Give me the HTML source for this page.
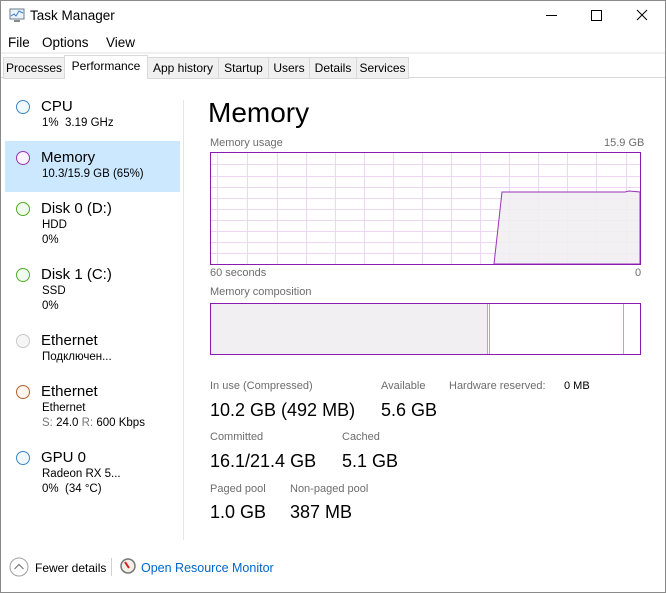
<!DOCTYPE html>
<html><head><style>
body{margin:0;width:666px;height:593px;overflow:hidden;background:#fff;font-family:"Liberation Sans",sans-serif;position:relative}
.a{position:absolute;white-space:nowrap}
.win{position:absolute;left:0;top:0;width:664px;height:591px;border:1px solid #8a8a8a}
.tab{position:absolute;top:57px;height:20px;background:#f0f0f0;border:1px solid #d9d9d9;font-size:12px;line-height:20px;text-align:center;color:#000}
.circ{position:absolute;width:12px;height:12px;border-radius:50%;border:1px solid}
.nm{font-size:15px;color:#000}
.sb{font-size:11.5px;color:#000}
.lb{font-size:11px;color:#6d6d6d}
.vl{font-size:18px;color:#000}
</style></head><body>
<div class="win"></div>
<svg class="a" style="left:8px;top:8px" width="18" height="16"><rect x="2" y="1" width="14" height="10" fill="#eaf3fb" stroke="#6a7a8a"/><polyline points="3,8 6,6 8,8 11,3 15,5" fill="none" stroke="#3b7cc0"/><rect x="6" y="12" width="6" height="2" fill="#888"/></svg>
<div class="a" style="left:30px;top:8px;font-size:13.5px">Task Manager</div>
<div class="a" style="left:546px;top:15px;width:11px;height:1px;background:#000"></div>
<div class="a" style="left:591px;top:10px;width:9px;height:9px;border:1px solid #000"></div>
<svg class="a" style="left:636px;top:9px" width="12" height="12"><path d="M1 1L11 11M11 1L1 11" stroke="#000"/></svg>
<div class="a" style="left:8px;top:35px;font-size:13.5px">File</div>
<div class="a" style="left:42px;top:35px;font-size:13.5px">Options</div>
<div class="a" style="left:106px;top:35px;font-size:13.5px">View</div>
<div class="a" style="left:1px;top:52px;width:664px;height:2px;background:#f0f0f0"></div>
<div class="a" style="left:1px;top:77px;width:664px;height:1px;background:#d9d9d9"></div>
<div class="tab" style="left:3px;width:60px">Processes</div>
<div class="tab" style="left:147px;width:70px">App history</div>
<div class="tab" style="left:218px;width:49px">Startup</div>
<div class="tab" style="left:268px;width:40px">Users</div>
<div class="tab" style="left:309px;width:46px">Details</div>
<div class="tab" style="left:356px;width:51px">Services</div>
<div class="tab" style="left:64px;top:55px;width:82px;height:23px;background:#fff;border-bottom:none;line-height:21px">Performance</div>
<div class="a" style="left:183px;top:100px;width:1px;height:440px;background:#e5e5e5"></div>
<div class="a" style="left:5px;top:141px;width:175px;height:51px;background:#cce8ff"></div>
<div class="circ" style="left:16px;top:100px;border-color:#3a86c8;background:#f2f8fd"></div>
<div class="a nm" style="left:41px;top:98px">CPU</div><div class="a sb" style="left:42px;top:117px">1%&nbsp; 3.19 GHz</div>
<div class="circ" style="left:16px;top:151px;border-color:#9b33b8;background:#fbf4fd"></div>
<div class="a nm" style="left:41px;top:149px">Memory</div><div class="a sb" style="left:42px;top:168px">10.3/15.9 GB (65%)</div>
<div class="circ" style="left:16px;top:202px;border-color:#4fae25;background:#f2fbef"></div>
<div class="a nm" style="left:41px;top:200px">Disk 0 (D:)</div><div class="a sb" style="left:42px;top:219px">HDD</div><div class="a sb" style="left:42px;top:234px">0%</div>
<div class="circ" style="left:16px;top:268px;border-color:#4fae25;background:#f2fbef"></div>
<div class="a nm" style="left:41px;top:266px">Disk 1 (C:)</div><div class="a sb" style="left:42px;top:285px">SSD</div><div class="a sb" style="left:42px;top:300px">0%</div>
<div class="circ" style="left:16px;top:334px;border-color:#c8c8c8;background:#f6f6f6"></div>
<div class="a nm" style="left:41px;top:332px">Ethernet</div><div class="a sb" style="left:42px;top:351px">Подключен...</div>
<div class="circ" style="left:16px;top:385px;border-color:#b8602a;background:#fdf6f1"></div>
<div class="a nm" style="left:41px;top:383px">Ethernet</div><div class="a sb" style="left:42px;top:402px">Ethernet</div><div class="a sb" style="left:42px;top:417px"><span style="color:#777">S:</span> 24.0 <span style="color:#777">R:</span> 600 Kbps</div>
<div class="circ" style="left:16px;top:451px;border-color:#3a86c8;background:#f2f8fd"></div>
<div class="a nm" style="left:41px;top:449px">GPU 0</div><div class="a sb" style="left:42px;top:468px">Radeon RX 5...</div><div class="a sb" style="left:42px;top:483px">0%&nbsp; (34 °C)</div>
<div class="a" style="left:208px;top:97px;font-size:28px">Memory</div>
<div class="a lb" style="left:210px;top:137px">Memory usage</div>
<div class="a lb" style="left:604px;top:137px">15.9 GB</div>
<svg class="a" style="left:210px;top:152px" width="431" height="113">
<g stroke="#ecd6f2" stroke-width="1">
<path d="M7.5 0V113M37.5 0V113M67.5 0V113M96.5 0V113M125.5 0V113M154.5 0V113M183.5 0V113M212.5 0V113M241.5 0V113M270.5 0V113M299.5 0V113M328.5 0V113M357.5 0V113M386.5 0V113M416.5 0V113"/>
<path d="M0 12.5H431M0 24.5H431M0 35.5H431M0 46.5H431M0 57.5H431M0 68.5H431M0 79.5H431M0 90.5H431M0 101.5H431"/>
</g>
<path d="M284 112L292 40H415L419 39L430 40V112Z" fill="#f1eef2" fill-opacity=".9" stroke="#9b33b8"/>
<rect x=".5" y=".5" width="430" height="112" fill="none" stroke="#8b1ab0"/>
</svg>
<div class="a lb" style="left:210px;top:267px">60 seconds</div>
<div class="a lb" style="left:635px;top:267px">0</div>
<div class="a lb" style="left:210px;top:286px">Memory composition</div>
<svg class="a" style="left:210px;top:303px" width="431" height="52">
<rect x="1" y="1" width="277" height="50" fill="#f1eff2"/>
<path d="M277.5 1V51M279.5 1V51M413.5 1V51" stroke="#c79ad6"/>
<rect x=".5" y=".5" width="430" height="51" fill="none" stroke="#8b1ab0"/>
</svg>
<div class="a lb" style="left:210px;top:380px">In use (Compressed)</div>
<div class="a lb" style="left:381px;top:380px">Available</div>
<div class="a lb" style="left:449px;top:380px">Hardware reserved:</div>
<div class="a" style="left:564px;top:380px;font-size:11px">0 MB</div>
<div class="a vl" style="left:210px;top:400px">10.2 GB (492 MB)</div>
<div class="a vl" style="left:381px;top:400px">5.6 GB</div>
<div class="a lb" style="left:210px;top:431px">Committed</div>
<div class="a lb" style="left:342px;top:431px">Cached</div>
<div class="a vl" style="left:210px;top:451px">16.1/21.4 GB</div>
<div class="a vl" style="left:342px;top:451px">5.1 GB</div>
<div class="a lb" style="left:210px;top:483px">Paged pool</div>
<div class="a lb" style="left:290px;top:483px">Non-paged pool</div>
<div class="a vl" style="left:210px;top:502px">1.0 GB</div>
<div class="a vl" style="left:290px;top:502px">387 MB</div>
<svg class="a" style="left:9px;top:557px" width="20" height="20"><circle cx="10" cy="10" r="9" fill="#fff" stroke="#a0a0a0"/><path d="M5.5 12L10 7.5L14.5 12" fill="none" stroke="#777" stroke-width="1.2"/></svg>
<div class="a" style="left:35px;top:561px;font-size:12px">Fewer details</div>
<div class="a" style="left:111px;top:558px;width:1px;height:18px;background:#d0d0d0"></div>
<svg class="a" style="left:120px;top:558px" width="16" height="16"><circle cx="8" cy="8" r="7" fill="#f3eee6" stroke="#777" stroke-width="1.5"/><path d="M5 4L9 10" stroke="#d02020" stroke-width="2"/></svg>
<div class="a" style="left:141px;top:561px;font-size:12.5px;color:#0066cc">Open Resource Monitor</div>
</body></html>
